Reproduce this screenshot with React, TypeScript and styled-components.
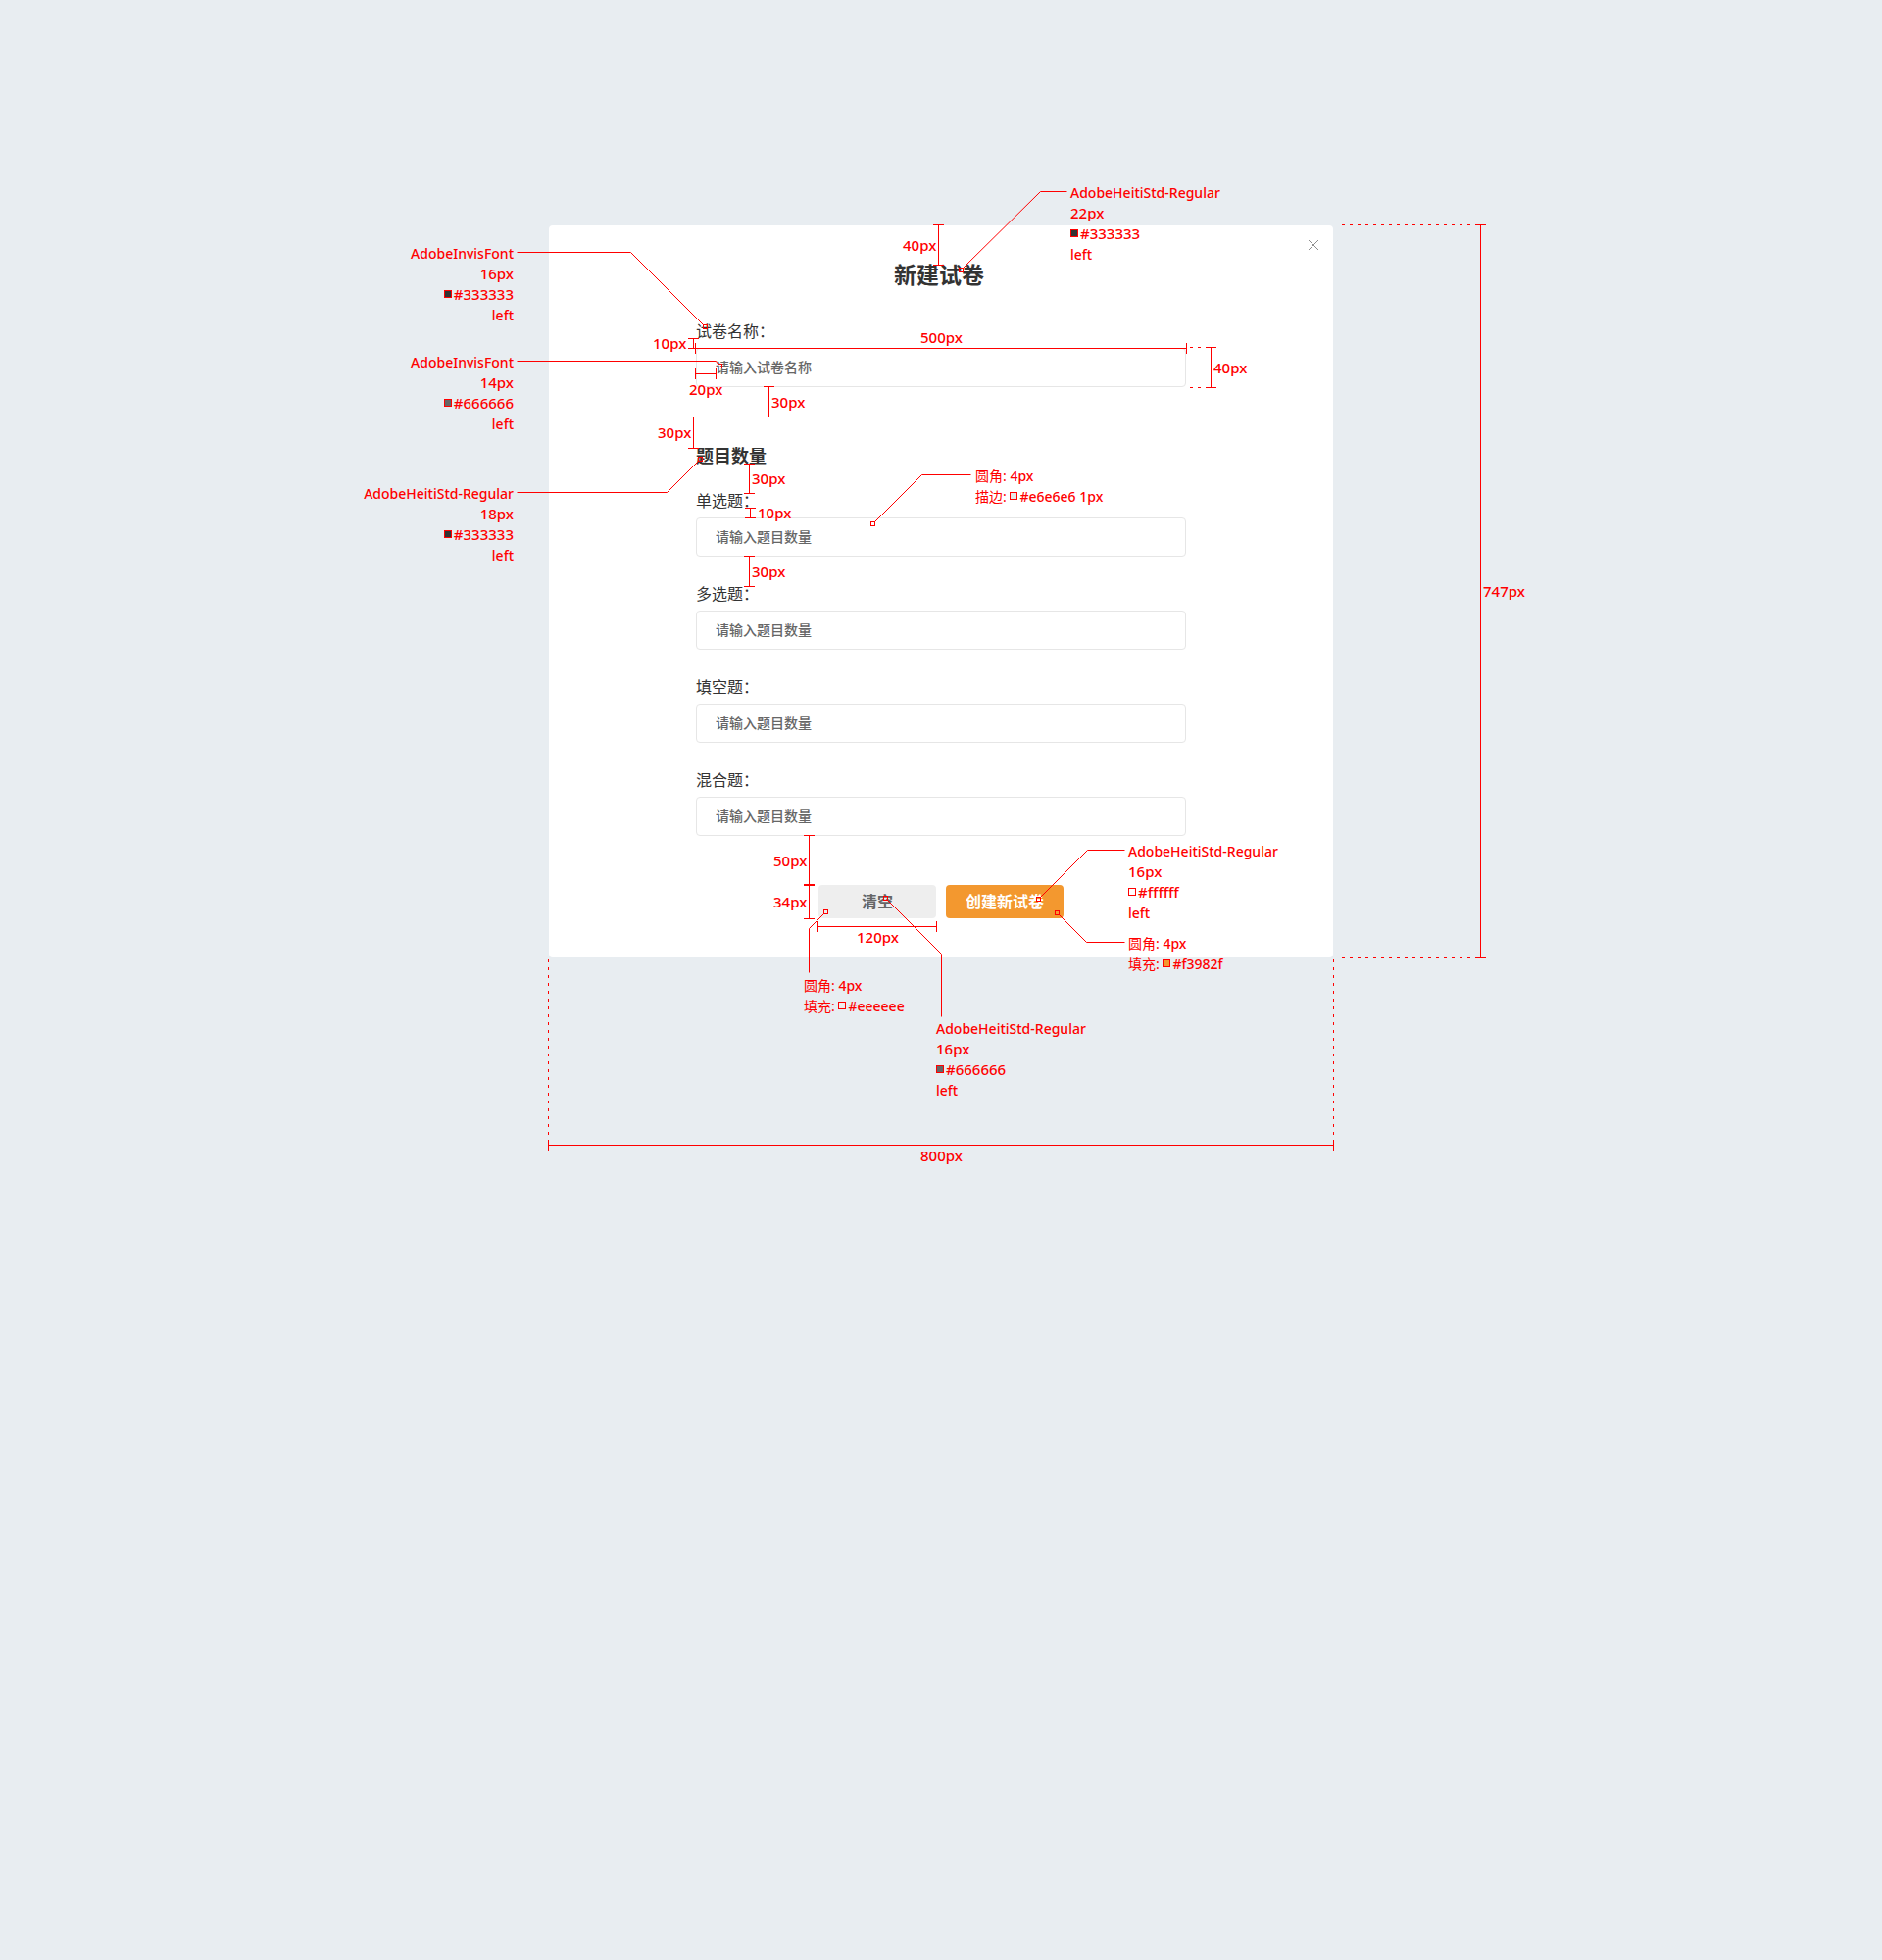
import React from "react";
import styled, { createGlobalStyle } from "styled-components";

const RED = "#ff0000";
const CJK = `"Noto Sans CJK SC", sans-serif`;

const GlobalStyle = createGlobalStyle`
  *, *::before, *::after { box-sizing: border-box; }
  body {
    margin: 0;
    background: #e8edf1;
    color: #333333;
    font-family: ${CJK};
  }
`;

const Page = styled.main`
  display: flex;
  justify-content: center;
  min-height: 100vh;
  padding: 230px 16px 120px;
`;

const Dialog = styled.section`
  position: relative;
  align-self: flex-start;
  width: 100%;
  max-width: 800px;
  padding: 38px 100px 40px;
  border-radius: 4px;
  background: #ffffff;
`;

const CloseButton = styled.button`
  position: absolute;
  top: 10px;
  right: 10px;
  display: grid;
  place-items: center;
  width: 20px;
  height: 20px;
  padding: 0;
  border: 0;
  background: none;
  cursor: pointer;
`;

const Title = styled.h1`
  margin: 0 0 39px;
  padding-right: 4px;
  font-size: 23px;
  line-height: 22px;
  font-weight: 700;
  text-align: center;
`;

const Form = styled.form`
  display: flex;
  flex-direction: column;
`;

const Fields = styled.div`
  display: flex;
  flex-direction: column;
  gap: 29px;
  padding: 0 50px;
`;

const Field = styled.div`
  display: flex;
  flex-direction: column;
  gap: 10px;
`;

const Label = styled.label`
  font-size: 16px;
  line-height: 16px;
`;

const Input = styled.input`
  width: 100%;
  height: 40px;
  padding: 0 19px 2px;
  border: 1px solid #e6e6e6;
  border-radius: 4px;
  background: #ffffff;
  color: #333333;
  font: 500 14px ${CJK};

  &::placeholder {
    color: #666666;
    opacity: 1;
  }
`;

const Divider = styled.hr`
  width: 100%;
  height: 1px;
  margin: 30px 0 29px;
  border: 0;
  background: #e6e6e6;
`;

const SectionTitle = styled.h2`
  margin: 0 0 29px;
  padding: 0 50px;
  font-size: 18px;
  line-height: 18px;
  font-weight: 700;
`;

const Actions = styled.div`
  display: flex;
  justify-content: center;
  gap: 10px;
  margin-top: 50px;
`;

const Button = styled.button<{ $primary?: boolean }>`
  width: 120px;
  height: 34px;
  padding: 0 0 2px;
  border: 0;
  border-radius: 4px;
  background: ${(p) => (p.$primary ? "#f3982f" : "#eeeeee")};
  color: ${(p) => (p.$primary ? "#ffffff" : "#666666")};
  font: 700 16px ${CJK};
  cursor: pointer;
`;

/* Redline layer: its coordinates start at the dialog's top left corner. */
const Redlines = styled.div`
  position: absolute;
  inset: 0;
  color: ${RED};
  font-family: "Noto Sans", ${CJK};
  font-size: 15px;
  font-weight: 500;
  line-height: 21px;
  white-space: nowrap;
  pointer-events: none;
`;

const Drawing = styled.svg`
  position: absolute;
  inset: 0;
  overflow: visible;
  fill: none;
  stroke: ${RED};
  stroke-width: 1;
`;

const Note = styled.div<{ $x: number; $y: number; $end?: boolean }>`
  position: absolute;
  left: ${(p) => p.$x}px;
  top: ${(p) => p.$y}px;
  display: flex;
  flex-direction: column;
  align-items: ${(p) => (p.$end ? "flex-end" : "flex-start")};
  ${(p) => p.$end && "width: 160px;"}
`;

const NoteLine = styled.span<{ $small?: boolean }>`
  font-size: ${(p) => (p.$small ? 14 : 15)}px;
`;

const Term = styled.span`
  font-weight: 400;
`;

const Swatch = styled.i<{ $color: string }>`
  display: inline-block;
  width: 8px;
  height: 8px;
  margin-right: 2px;
  border: 1px solid ${RED};
  background: ${(p) => p.$color};
  vertical-align: 2px;
`;

type Measure = { x1: number; y1: number; x2: number; y2: number; text: string; tx: number; ty: number };

const measures: Measure[] = [
  { x1: 397, y1: -1, x2: 397, y2: 40, text: "40px", tx: 361, ty: 10 },
  { x1: 149, y1: 125, x2: 650, y2: 125, text: "500px", tx: 379, ty: 104 },
  { x1: 147, y1: 115, x2: 147, y2: 125, text: "10px", tx: 106, ty: 110 },
  { x1: 149, y1: 151, x2: 170, y2: 151, text: "20px", tx: 143, ty: 157 },
  { x1: 224, y1: 164, x2: 224, y2: 195, text: "30px", tx: 227, ty: 170 },
  { x1: 147, y1: 195, x2: 147, y2: 227, text: "30px", tx: 111, ty: 201 },
  { x1: 204, y1: 243, x2: 204, y2: 273, text: "30px", tx: 207, ty: 248 },
  { x1: 205, y1: 288, x2: 205, y2: 298, text: "10px", tx: 213, ty: 283 },
  { x1: 204, y1: 337, x2: 204, y2: 368, text: "30px", tx: 207, ty: 343 },
  { x1: 675, y1: 124, x2: 675, y2: 165, text: "40px", tx: 678, ty: 135 },
  { x1: 265, y1: 622, x2: 265, y2: 672, text: "50px", tx: 229, ty: 638 },
  { x1: 265, y1: 673, x2: 265, y2: 707, text: "34px", tx: 229, ty: 680 },
  { x1: 274, y1: 715, x2: 395, y2: 715, text: "120px", tx: 314, ty: 716 },
  { x1: -1, y1: 938, x2: 800, y2: 938, text: "800px", tx: 379, ty: 939 },
  { x1: 950, y1: -1, x2: 950, y2: 747, text: "747px", tx: 953, ty: 363 },
];

const guides = [
  "M654 124H670",
  "M654 165H670",
  "M809 -1H945",
  "M809 747H945",
  "M-1 749V933",
  "M800 749V933",
];

type Callout = {
  path: string;
  mx: number;
  my: number;
  x: number;
  y: number;
  end?: boolean;
  font?: string;
  size?: string;
  prop?: string;
  color: string;
  suffix?: string;
};

const callouts: Callout[] = [
  { path: "M-33 27H83L157 101", mx: 159, my: 103, x: -196, y: 18, end: true, font: "AdobeInvisFont", size: "16px", color: "#333333" },
  { path: "M-33 138H170L172 141", mx: 174, my: 143, x: -196, y: 129, end: true, font: "AdobeInvisFont", size: "14px", color: "#666666" },
  { path: "M-33 272H120L152 240", mx: 154, my: 238, x: -196, y: 263, end: true, font: "AdobeHeitiStd-Regular", size: "18px", color: "#333333" },
  { path: "M528 -35H501L422 43", mx: 420, my: 45, x: 532, y: -44, font: "AdobeHeitiStd-Regular", size: "22px", color: "#333333" },
  { path: "M430 254H380L332 302", mx: 330, my: 304, x: 435, y: 245, prop: "描边", color: "#e6e6e6", suffix: " 1px" },
  { path: "M587 637H549L501 685", mx: 499, my: 687, x: 591, y: 628, font: "AdobeHeitiStd-Regular", size: "16px", color: "#ffffff" },
  { path: "M587 731H548L520 703", mx: 518, my: 701, x: 591, y: 722, prop: "填充", color: "#f3982f" },
  { path: "M265 762V717L280 702", mx: 282, my: 700, x: 260, y: 765, prop: "填充", color: "#eeeeee" },
  { path: "M400 807V743L345 688", mx: 343, my: 686, x: 395, y: 809, font: "AdobeHeitiStd-Regular", size: "16px", color: "#666666" },
];

const measurePath = ({ x1, y1, x2, y2 }: Measure) =>
  x1 === x2
    ? `M${x1} ${y1}V${y2}M${x1 - 5.5} ${y1}h11M${x1 - 5.5} ${y2}h11`
    : `M${x1} ${y1}H${x2}M${x1} ${y1 - 5.5}v11M${x2} ${y2 - 5.5}v11`;

const countFields = [
  { id: "single", label: "单选题：" },
  { id: "multiple", label: "多选题：" },
  { id: "blank", label: "填空题：" },
  { id: "mixed", label: "混合题：" },
];

function Annotations() {
  return (
    <Redlines>
      <Drawing width="100%" height="100%" aria-hidden="true">
        <g transform="translate(0.5 0.5)">
          {measures.map((m, i) => (
            <path key={i} d={measurePath(m)} />
          ))}
          {guides.map((d) => (
            <path key={d} d={d} strokeDasharray="3 5" transform={d.includes("V") ? "translate(0 -0.5)" : "translate(-0.5 0)"} />
          ))}
          {callouts.map((c, i) => (
            <g key={i}>
              <path d={c.path} />
              <rect x={c.mx - 2} y={c.my - 2} width="4" height="4" />
            </g>
          ))}
        </g>
      </Drawing>
      {measures.map((m, i) => (
        <Note key={i} $x={m.tx} $y={m.ty}>
          {m.text}
        </Note>
      ))}
      {callouts.map((c, i) => (
        <Note key={i} $x={c.x} $y={c.y} $end={c.end}>
          {c.font ? (
            <>
              <NoteLine $small>{c.font}</NoteLine>
              <NoteLine>{c.size}</NoteLine>
              <NoteLine>
                <Swatch $color={c.color} />
                {c.color}
              </NoteLine>
              <NoteLine $small>left</NoteLine>
            </>
          ) : (
            <>
              <NoteLine $small>
                <Term>圆角: </Term>4px
              </NoteLine>
              <NoteLine $small>
                <Term>{c.prop}: </Term>
                <Swatch $color={c.color} />
                {c.color}
                {c.suffix}
              </NoteLine>
            </>
          )}
        </Note>
      ))}
    </Redlines>
  );
}

export default function App() {
  return (
    <>
      <GlobalStyle />
      <Page>
        <Dialog role="dialog" aria-labelledby="dialog-title">
          <CloseButton type="button" aria-label="关闭">
            <svg width="12" height="12" viewBox="0 0 12 12" fill="none" stroke="#8e8e8e" strokeWidth="1">
              <path d="M1 1L11 11M11 1L1 11" />
            </svg>
          </CloseButton>
          <Title id="dialog-title">新建试卷</Title>
          <Form onSubmit={(e) => e.preventDefault()}>
            <Fields>
              <Field>
                <Label htmlFor="paper-name">试卷名称：</Label>
                <Input id="paper-name" type="text" placeholder="请输入试卷名称" />
              </Field>
            </Fields>
            <Divider />
            <SectionTitle>题目数量</SectionTitle>
            <Fields>
              {countFields.map((f) => (
                <Field key={f.id}>
                  <Label htmlFor={f.id}>{f.label}</Label>
                  <Input id={f.id} type="text" inputMode="numeric" placeholder="请输入题目数量" />
                </Field>
              ))}
            </Fields>
            <Actions>
              <Button type="reset">清空</Button>
              <Button type="submit" $primary>
                创建新试卷
              </Button>
            </Actions>
          </Form>
          <Annotations />
        </Dialog>
      </Page>
    </>
  );
}
